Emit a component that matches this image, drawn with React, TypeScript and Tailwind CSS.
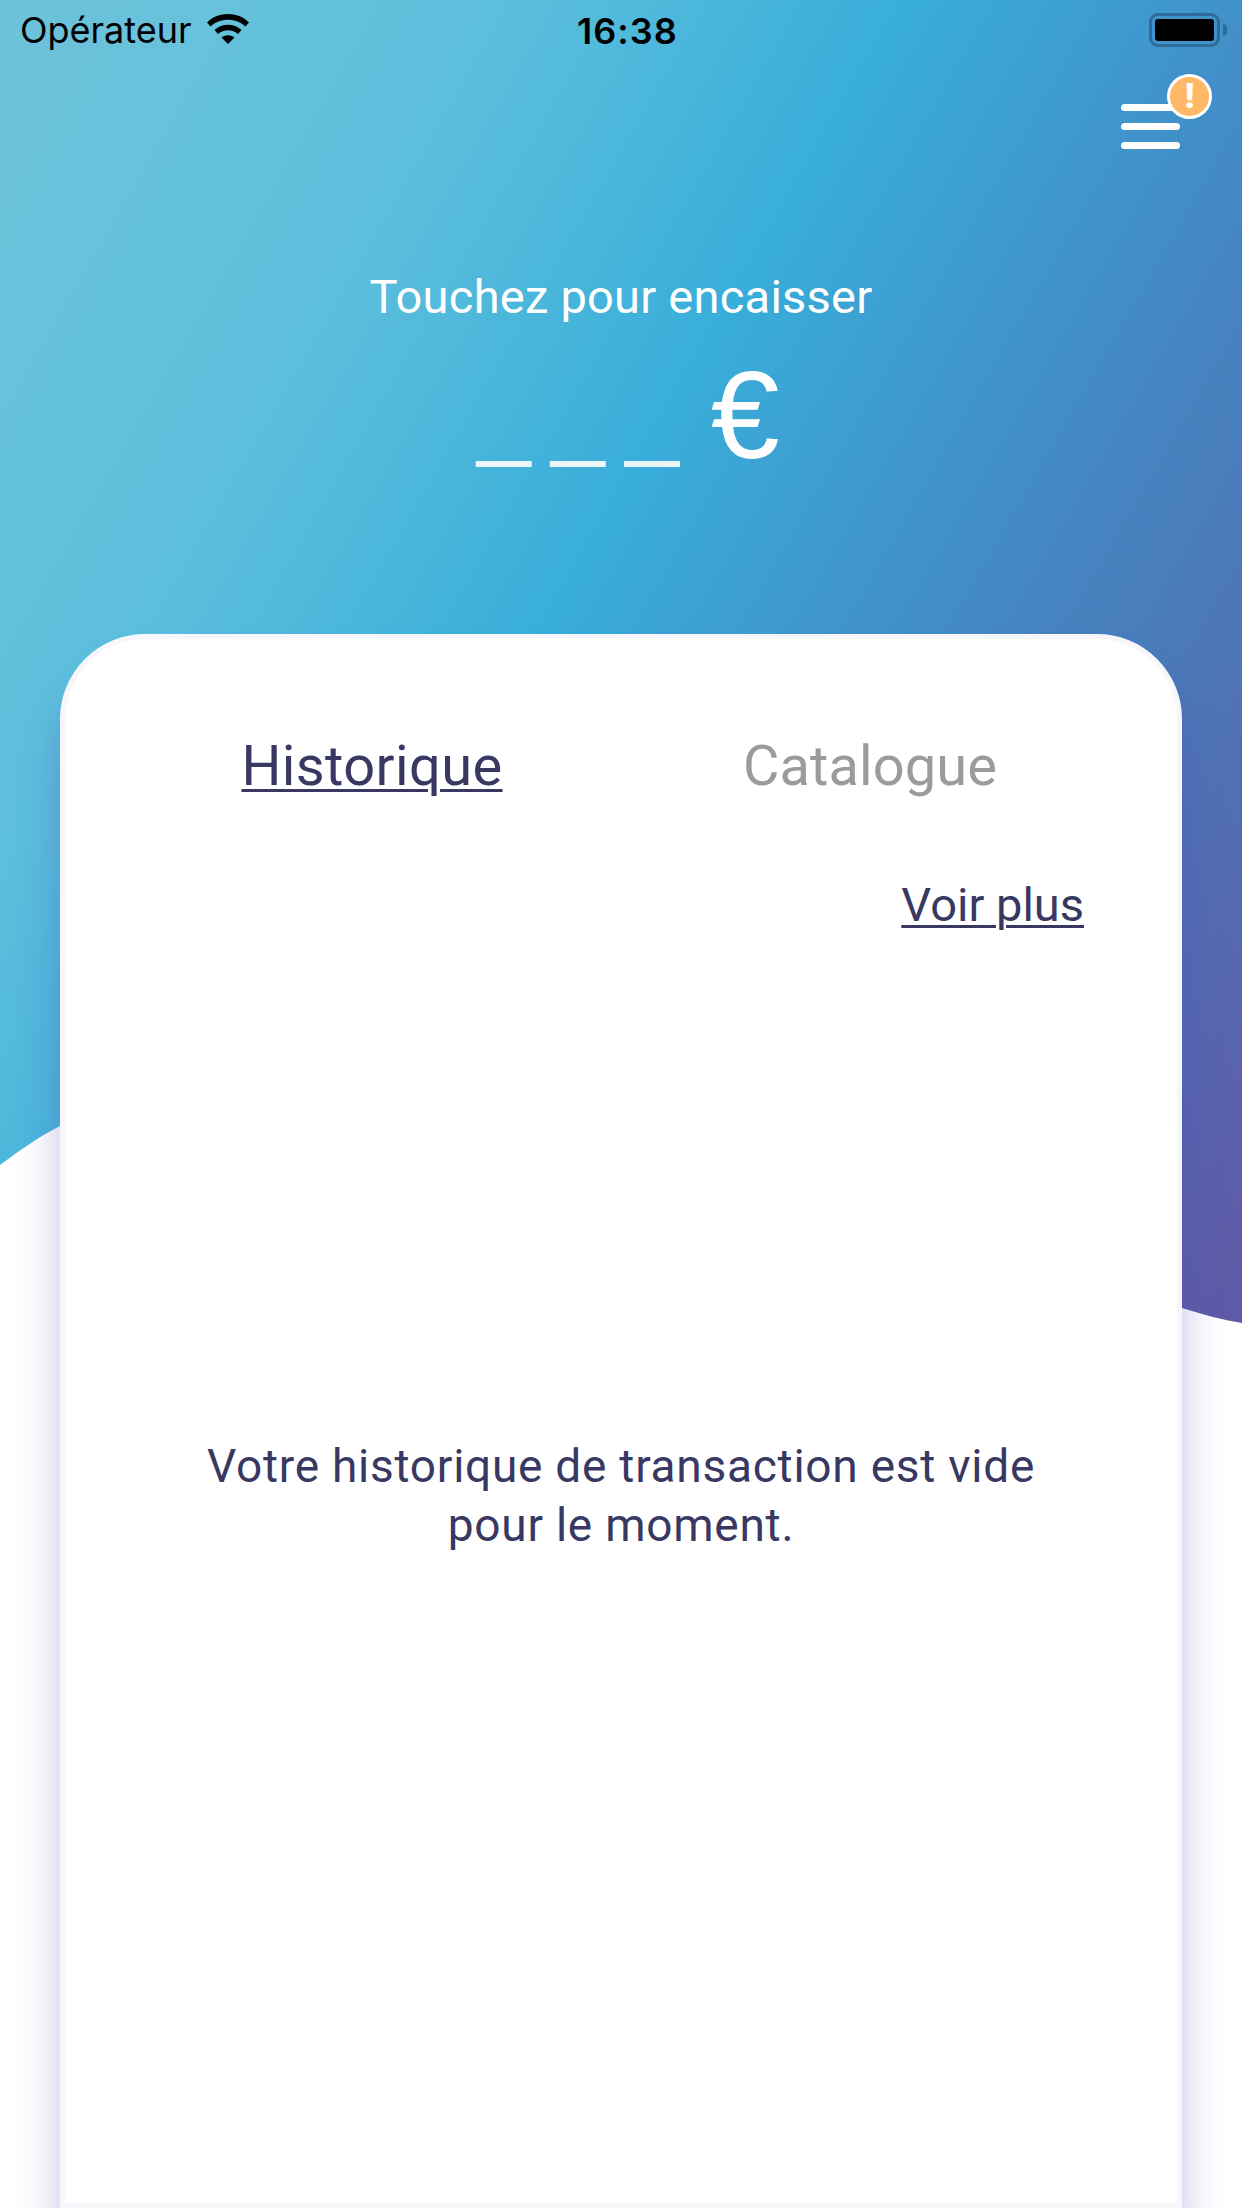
export default function App() {
  return (
    <div className="relative w-[1242px] h-[2208px] overflow-hidden bg-white font-['Roboto',sans-serif]">
      {/* Gradient backdrop with wave edge */}
      <div className="absolute left-0 top-0 w-[1242px] h-[1330px] bg-[linear-gradient(120deg,#6fc1da_0%,#64c2dc_15%,#5bbedc_26%,#38aeda_45%,#4488c4_67%,#4c78b8_78%,#5f5aa7_98%)]">
        <svg className="absolute left-0 top-[1100px]" width="1242" height="230" viewBox="0 0 1242 230">
          <path d="M0 65 C 20 50, 40 36, 60 26 C 200 -20, 420 -10, 640 60 C 820 120, 1000 190, 1182 208 C 1202 214, 1222 220, 1242 223 L1242 230 L0 230 Z" fill="#ffffff" />
        </svg>
      </div>

      <div className="relative flex flex-col h-full">
        {/* Status bar */}
        <div className="relative flex items-center justify-between h-[60px] pl-[20px] pr-[15px] text-black font-['Inter',sans-serif]">
          <div className="flex items-center gap-[15px]">
            <span className="text-[36px] leading-[40px]">Opérateur</span>
            <svg width="42" height="30" viewBox="0 0 42 30" className="mb-[3px]">
              <path d="M0 8.5C11-2.8 31-2.8 42 8.5L38.5 12.5C29.5 3.5 12.5 3.5 3.5 12.5Z" fill="#000" />
              <path d="M7.5 16C15 9 27 9 34.5 16L31 20C25 15 17 15 11 20Z" fill="#000" />
              <path d="M14.5 23.5C18.5 20.5 23.5 20.5 27.5 23.5L21 30Z" fill="#000" />
            </svg>
          </div>
          <span className="absolute left-[577px] top-[11px] text-[36px] leading-[40px] font-semibold tracking-[1px]">16:38</span>
          <div className="flex items-center">
            <div className="w-[71px] h-[34px] rounded-[9px] border-[3px] border-[#2f6c98] p-[3px]">
              <div className="w-full h-full rounded-[3px] bg-black" />
            </div>
            <div className="w-[4px] h-[12px] ml-[3px] rounded-r-[4px] bg-[#2f6c98]" />
          </div>
        </div>

        {/* Menu */}
        <div className="flex justify-end pr-[62px] pt-[44px]">
          <div className="relative flex flex-col gap-[12px] w-[59px]">
            <div className="h-[7px] rounded-full bg-white" />
            <div className="h-[7px] rounded-full bg-white" />
            <div className="h-[7px] rounded-full bg-white" />
            <div className="absolute left-[46px] top-[-30px] flex items-center justify-center w-[45px] h-[45px] rounded-full border-[3px] border-white bg-[#ffb866] text-white text-[35px] leading-none font-black">!</div>
          </div>
        </div>

        {/* Amount */}
        <div className="flex flex-col items-center text-white mt-[120px]">
          <div className="text-[47px] leading-[56px] font-[375] tracking-[0.25px]">Touchez pour encaisser</div>
          <div className="flex items-end h-[128px] mt-[22px] ml-[15px] font-['Liberation_Sans',sans-serif]">
            <span className="text-[96px] leading-[120px] opacity-90 tracking-[-3px]">_ _ _</span>
            <span className="text-[124px] leading-[120px] ml-[35px]">€</span>
          </div>
        </div>

        {/* Card */}
        <div className="flex-1 mx-[60px] mt-[159px] rounded-t-[85px] border-[5px] border-[#f6f6fb] bg-white shadow-[0_40px_40px_rgba(70,70,190,0.34)] overflow-hidden">
          <div className="grid grid-cols-2 px-[58px] pt-[94px] text-center text-[56px] leading-[66px] font-[375]">
            <span className="text-[#383863] tracking-[0.4px] underline decoration-[3px] underline-offset-[4px]">Historique</span>
            <span className="text-[#9b9b9b] tracking-[0.1px]">Catalogue</span>
          </div>
          <div className="flex justify-end pr-[93px] pt-[79px]">
            <span className="text-[47px] leading-[54px] font-[375] text-[#383863] underline decoration-[3px] underline-offset-[4px]">Voir plus</span>
          </div>
          <div className="mt-[505px] text-center text-[46px] leading-[59px] font-[375] tracking-[0.75px] text-[#383863]">
            <div>Votre historique de transaction est vide</div>
            <div>pour le moment.</div>
          </div>
        </div>
      </div>
    </div>
  );
}
